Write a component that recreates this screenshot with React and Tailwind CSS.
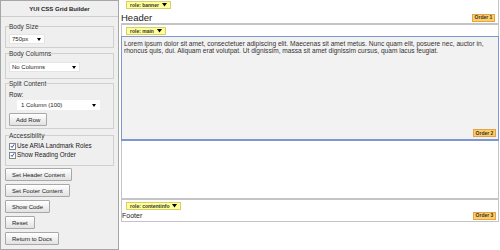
import React from "react";

const Tag = ({ label }) => (
  <span className="inline-flex items-center gap-[3px] h-[8px] px-[3px] bg-[#ffff99] border border-[#d8cf6a] text-[5px] leading-none font-bold text-[#333]">
    {label}
    <svg width="5" height="4" viewBox="0 0 5 4">
      <path d="M0 0 L5 0 L2.5 3.5 Z" fill="#000" />
    </svg>
  </span>
);

const Order = ({ n }) => (
  <span className="inline-flex items-center justify-center w-[23px] h-[8px] bg-[#ffcc66] border border-[#e3a445] text-[5px] leading-none font-bold text-[#333]">
    Order {n}
  </span>
);

const FakeSelect = ({ value, className }) => (
  <div className={`flex items-center justify-between h-[10px] bg-white border border-[#e4e4e4] pl-[2px] pr-[3px] text-[6px] leading-none text-[#222] ${className}`}>
    <span>{value}</span>
    <svg width="4" height="3" viewBox="0 0 4 3">
      <path d="M0 0 L4 0 L2 3 Z" fill="#000" />
    </svg>
  </div>
);

const Btn = ({ children, className = "" }) => (
  <button className={`h-[13px] px-[6px] border border-[#a8a8a8] rounded-[1px] bg-gradient-to-b from-white to-[#e2e2e2] text-[6px] leading-none text-[#222] ${className}`}>
    {children}
  </button>
);

const Check = ({ label }) => (
  <div className="flex items-center h-[8px] text-[6.3px] leading-none text-[#222]">
    <span className="flex items-center justify-center w-[7px] h-[7px] border border-[#888] bg-white mr-[1px]">
      <svg width="6" height="6" viewBox="0 0 6 6">
        <path d="M1 3 L2.5 4.8 L5 1" stroke="#2a5db0" strokeWidth="1.2" fill="none" />
      </svg>
    </span>
    {label}
  </div>
);

const Box = ({ legend, children, className = "" }) => (
  <fieldset className={`mx-[4px] border border-[#d0d0d0] px-[3px] flex flex-col items-start ${className}`}>
    <legend className="text-[6.5px] leading-[7px] text-[#333] px-0">{legend}</legend>
    {children}
  </fieldset>
);

export default function App() {
  return (
    <div className="flex w-[500px] h-[250px] bg-white overflow-hidden leading-none" style={{ fontFamily: '"Liberation Sans", Arial, sans-serif' }}>
      {/* builder panel */}
      <div className="w-[119px] h-[250px] shrink-0 bg-[#efefef] border border-[#a6a6a6] flex flex-col">
        <div className="h-[16px] shrink-0 border-b border-[#cdcdcd] flex items-center justify-center text-[6px] font-bold text-[#222]">
          YUI CSS Grid Builder
        </div>

        <Box legend="Body Size" className="mt-[6px] h-[25px] shrink-0">
          <FakeSelect value="750px" className="w-[36px] mt-[4px]" />
        </Box>

        <Box legend="Body Columns" className="mt-[2px] h-[29px] shrink-0">
          <FakeSelect value="No Columns" className="w-[71px] mt-[5px]" />
        </Box>

        <Box legend="Split Content" className="mt-[1px] h-[49px] shrink-0">
          <div className="text-[6.3px] leading-[7px] text-[#222] mt-[4px]">Row:</div>
          <FakeSelect value="1 Column (100)" className="w-[83px] h-[9px] ml-[8px] mt-[2px] border-white pl-[3px]" />
          <Btn className="mt-[3px] h-[12px]">Add Row</Btn>
        </Box>

        <Box legend="Accessibility" className="mt-[3px] h-[34px] shrink-0">
          <div className="mt-[3px]">
            <Check label="Use ARIA Landmark Roles" />
          </div>
          <div className="mt-[1px]">
            <Check label="Show Reading Order" />
          </div>
        </Box>

        <div className="flex flex-col items-start gap-[3px] px-[4px] mt-[2px]">
          <Btn>Set Header Content</Btn>
          <Btn>Set Footer Content</Btn>
          <Btn>Show Code</Btn>
          <Btn>Reset</Btn>
          <Btn>Return to Docs</Btn>
        </div>
      </div>

      {/* preview */}
      <div className="ml-[2px] w-[378px] flex flex-col">
        <div className="h-[25px] shrink-0 border-r border-b-2 border-[#c4c4c4] flex flex-col pt-[1px]">
          <div className="flex pl-[5px]"><Tag label="role: banner" /></div>
          <div className="flex items-center justify-between pr-[3px] mt-[3px]">
            <span className="text-[9.5px] leading-[11px] text-[#222]">Header</span>
            <Order n={1} />
          </div>
        </div>

        <div className="h-[175px] shrink-0 border-x border-b-2 border-[#c4c4c4] flex flex-col pt-[2px]">
          <div className="flex pl-[4px]"><Tag label="role: main" /></div>
          <div className="mt-[1px] -mx-px h-[105px] bg-[#f2f2f2] border border-b-2 border-[#7f97d0] flex flex-col justify-between pt-[3px] pb-[2px] pl-[2px] pr-[2px]">
            <p className="text-[6.6px] leading-[7px] text-[#333]">
              Lorem ipsum dolor sit amet, consectetuer adipiscing elit. Maecenas sit amet metus. Nunc quam elit, posuere nec, auctor in, rhoncus quis, dui. Aliquam erat volutpat. Ut dignissim, massa sit amet dignissim cursus, quam lacus feugiat.
            </p>
            <div className="flex justify-end"><Order n={2} /></div>
          </div>
        </div>

        <div className="h-[22px] shrink-0 border-x border-b border-[#c4c4c4] flex flex-col pt-[2px]">
          <div className="flex pl-[4px]"><Tag label="role: contentinfo" /></div>
          <div className="flex items-center justify-between pr-[2px] mt-[1px]">
            <span className="text-[7px] leading-[9px] text-[#222]">Footer</span>
            <Order n={3} />
          </div>
        </div>
      </div>
    </div>
  );
}
